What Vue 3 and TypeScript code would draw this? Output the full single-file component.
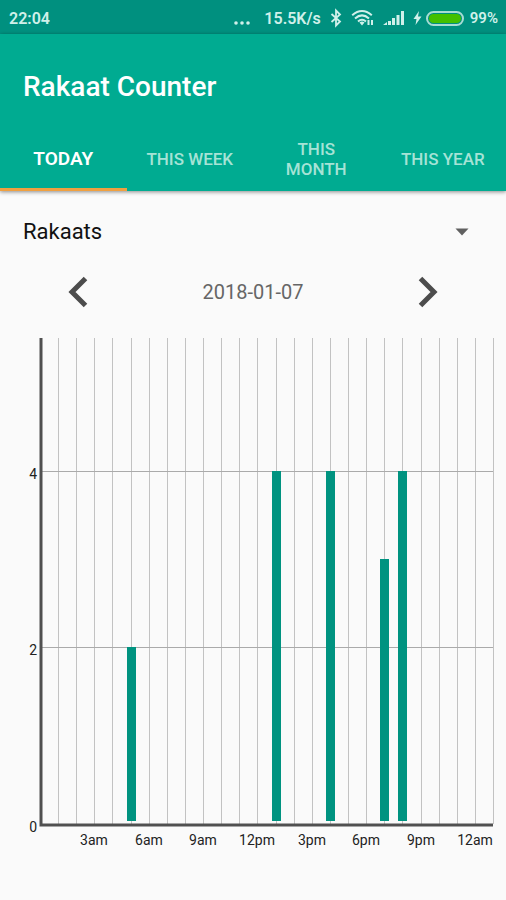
<script setup lang="ts">
import { computed, ref } from 'vue'

interface Entry {
  hour: number
  count: number
}

const tabs = ['Today', 'This week', 'This month', 'This year']
const activeTab = ref(0)
const metric = ref('Rakaats')
const day = ref('2018-01-07')

const entries: Entry[] = [
  { hour: 5, count: 2 },
  { hour: 13, count: 4 },
  { hour: 16, count: 4 },
  { hour: 19, count: 3 },
  { hour: 20, count: 4 },
]

const left = 40
const right = 493
const top = 2
const base = 488
const slots = 25
const maxCount = 5.5

const x = (hour: number): number => Math.round(left + (hour * (right - left)) / slots)
const y = (count: number): number => Math.round(base - (count * (base - top)) / maxCount)

const hours = Array.from({ length: slots }, (_, i) => i + 1)
const levels = [2, 4]
const hourLabels = [3, 6, 9, 12, 15, 18, 21, 24].map((hour) => ({
  hour,
  text: `${hour % 12 || 12}${hour >= 12 && hour < 24 ? 'pm' : 'am'}`,
}))

const bars = computed(() =>
  entries.map((e) => ({ x: x(e.hour) - 4, y: y(e.count), height: base - 3 - y(e.count) })),
)

function shiftDay(step: number): void {
  const d = new Date(`${day.value}T00:00:00Z`)
  d.setUTCDate(d.getUTCDate() + step)
  day.value = d.toISOString().slice(0, 10)
}
</script>

<template>
  <div class="screen">
    <div class="status">
      <span>22:04</span>
      <div class="status-right">
        <svg class="dots" width="18" height="20" viewBox="0 0 18 20" aria-hidden="true">
          <circle cx="3" cy="15" r="1.800" />
          <circle cx="9" cy="15" r="1.800" />
          <circle cx="15" cy="15" r="1.800" />
        </svg>
        <span class="speed">15.5K/s</span>
        <svg class="bluetooth" width="12" height="20" viewBox="0 0 12 20" aria-hidden="true">
          <path d="M1.5 6 L10 13.5 L6 17.5 V2.5 L10 6.5 L1.5 14" />
        </svg>
        <svg class="wifi" width="23" height="20" viewBox="0 0 23 20" aria-hidden="true">
          <path class="arc" d="M1.2 7.2 Q11 -1.200 20.800 7.200" />
          <path class="arc" d="M4 10.500 Q11 4.300 18 10.500" />
          <path class="arc" d="M7 13.500 Q11 10 15 13.500" />
          <path d="M8.500 14.500 Q11 12.500 13.500 14.500 L11 17.500 Z" />
          <path d="M16.500 12 h2 v5 h-2z M20 12 h2 v5 h-2z" />
        </svg>
        <svg class="signal" width="22" height="20" viewBox="0 0 22 20" aria-hidden="true">
          <path d="M0 17 L4 14 V17 Z M5 13 h3 v4 h-3z M9 10 h3 v7 h-3z M13.500 7 h3 v10 h-3z M18 3 h3 v14 h-3z" />
        </svg>
        <svg class="bolt" width="9" height="20" viewBox="0 0 9 20" aria-hidden="true">
          <path d="M6 3 L0.500 11 H3.500 L2.500 17 L8.500 8.500 H5 Z" />
        </svg>
        <svg class="battery" width="38" height="20" viewBox="0 0 38 20" aria-hidden="true">
          <rect class="shell" x="1" y="4" width="36" height="13" rx="6.500" />
          <rect class="charge" x="3" y="6" width="32" height="9" rx="4.500" />
        </svg>
        <span class="level-text">99%</span>
      </div>
    </div>

    <header class="appbar">
      <h1>Rakaat Counter</h1>
      <nav class="tabs" role="tablist">
        <button
          v-for="(tab, i) in tabs"
          :key="tab"
          type="button"
          role="tab"
          :aria-selected="i === activeTab"
          :class="['tab', { active: i === activeTab }]"
          @click="activeTab = i"
        >
          {{ tab }}
        </button>
      </nav>
    </header>

    <main>
      <div class="metric">
        <select v-model="metric" aria-label="Metric">
          <option>Rakaats</option>
        </select>
        <svg class="caret" width="14" height="8" viewBox="0 0 14 8" aria-hidden="true">
          <path d="M0.500 0.500 H13.500 L7 7.500 Z" />
        </svg>
      </div>

      <div class="pager">
        <button type="button" aria-label="Previous day" @click="shiftDay(-1)">
          <svg width="20" height="32" viewBox="0 0 20 32" aria-hidden="true">
            <path d="M17.500 2.500 L4 16 L17.500 29.500" />
          </svg>
        </button>
        <time :datetime="day">{{ day }}</time>
        <button type="button" aria-label="Next day" @click="shiftDay(1)">
          <svg width="20" height="32" viewBox="0 0 20 32" aria-hidden="true">
            <path d="M2.500 2.500 L16 16 L2.500 29.500" />
          </svg>
        </button>
      </div>

      <svg class="chart" viewBox="0 0 506 520" role="img" aria-label="Rakaats per hour">
        <rect v-for="h in hours" :key="`h${h}`" class="vline" :x="x(h)" :y="top" width="1" :height="base - top" />
        <rect v-for="l in levels" :key="`l${l}`" class="hline" :x="left" :y="y(l)" :width="right - left" height="1" />
        <rect v-for="b in bars" :key="b.x" class="bar" :x="b.x" :y="b.y" width="9" :height="b.height" />
        <path class="axis" :d="`M${left + 1} ${top} V${base + 1} H${right}`" />
        <text v-for="n in [0, 2, 4]" :key="`n${n}`" class="level" x="37" :y="y(n) + 8">{{ n }}</text>
        <text v-for="l in hourLabels" :key="l.text" class="hour" :x="x(l.hour)" y="509">{{ l.text }}</text>
      </svg>
    </main>
  </div>
</template>

<style>
body {
  background: #fafafa;
}
</style>

<style scoped>
.screen {
  min-height: 100vh;
  background: #fafafa;
  color: #111;
  font-family: Roboto, 'Liberation Sans', sans-serif;
}

.status {
  display: flex;
  align-items: center;
  justify-content: space-between;
  height: 34px;
  padding: 2px 8px 0 9px;
  box-sizing: border-box;
  background: #00907f;
  color: #d0f0ea;
  font-size: 16px;
  font-weight: 600;
}

.status-right {
  display: flex;
  align-items: center;
  white-space: nowrap;
}

.status svg {
  fill: #d0f0ea;
}

.speed {
  margin: 0 9px 0 13px;
}

.bluetooth path {
  fill: none;
  stroke: #d0f0ea;
  stroke-width: 1.8;
}

.wifi {
  margin-left: 9px;
}

.wifi .arc {
  fill: none;
  stroke: #d0f0ea;
  stroke-width: 2;
}

.signal {
  margin-left: 9px;
}

.bolt {
  margin-left: 8px;
}

.battery {
  margin: 0 6px 0 4px;
}

.battery .shell {
  fill: #00907f;
  stroke: #a8dcd4;
  stroke-width: 2;
}

.battery .charge {
  fill: #43c000;
}

.level-text {
  font-size: 15px;
}

.appbar {
  position: relative;
  background: #00ab91;
  box-shadow: 0 1px 4px rgba(0, 0, 0, 0.45);
}

h1 {
  margin: 0;
  padding: 36px 23px 0;
  color: #fff;
  font-size: 28px;
  font-weight: 500;
  line-height: 34px;
}

.tabs {
  display: grid;
  grid-template-columns: repeat(4, 1fr);
  margin-top: 23px;
}

.tab {
  height: 64px;
  padding: 2px 24px 0;
  border: 0;
  border-bottom: 3px solid transparent;
  background: none;
  color: #a6e3d6;
  font: 500 17px/20px Roboto, 'Liberation Sans', sans-serif;
  text-transform: uppercase;
}

.tab:nth-child(even) {
  padding-right: 0;
  padding-left: 0;
}

.tab.active {
  border-bottom-color: #f0a040;
  color: #fff;
  font-size: 19px;
  font-weight: 600;
}

.metric {
  position: relative;
  padding: 24px 23px 0;
}

.metric select {
  display: block;
  width: 100%;
  height: 34px;
  padding: 0;
  border: 0;
  appearance: none;
  background: transparent;
  color: #111;
  font: 400 22px/34px Roboto, 'Liberation Sans', sans-serif;
}

.caret {
  position: absolute;
  right: 37px;
  top: 37px;
  fill: #606060;
  pointer-events: none;
}

.pager {
  display: flex;
  align-items: center;
  justify-content: space-between;
  height: 60px;
  margin-top: 13px;
  padding: 0 60px;
}

.pager button {
  display: flex;
  padding: 8px;
  border: 0;
  background: none;
}

.pager path {
  fill: none;
  stroke: #4c4c4c;
  stroke-width: 5;
}

.pager time {
  color: #666;
  font-size: 20px;
}

.chart {
  display: block;
  width: 100%;
  margin-top: 14px;
}

.vline {
  fill: #c2c2c2;
}

.hline {
  fill: #aaa;
}

.bar {
  fill: #009380;
}

.axis {
  fill: none;
  stroke: #505050;
  stroke-width: 3;
}

.level,
.hour {
  fill: #222;
  font-size: 14px;
}

.level {
  text-anchor: end;
}

.hour {
  text-anchor: middle;
}
</style>
